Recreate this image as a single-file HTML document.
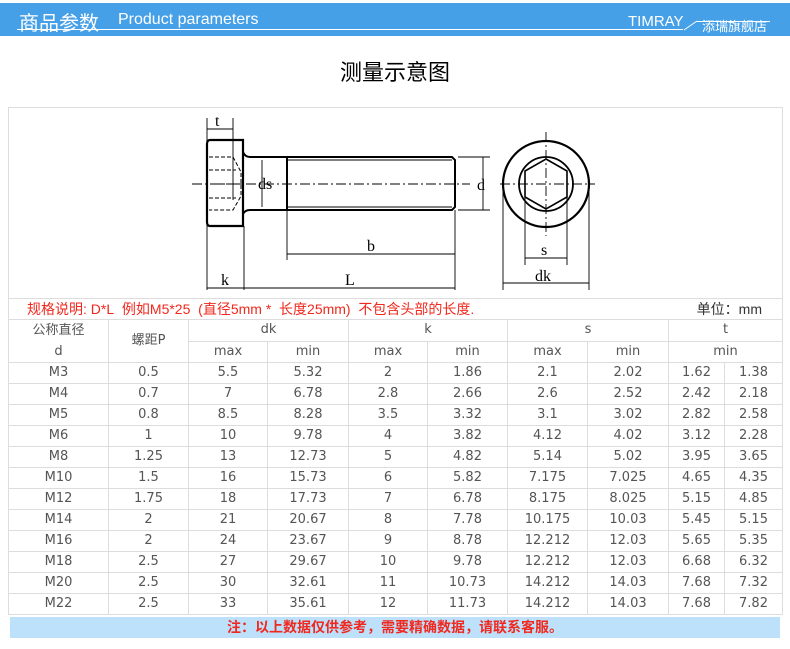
<!DOCTYPE html>
<html><head><meta charset="utf-8"><style>
*{margin:0;padding:0;box-sizing:border-box}
body{width:790px;height:649px;background:#fff;position:relative;font-family:"Liberation Sans","Noto Sans CJK SC",sans-serif;overflow:hidden}
.hdr{position:absolute;left:0;top:3px;width:790px;height:33px;background:#46a0e8;color:#fff}
.hdr .l1{position:absolute;left:19px;top:4px;font-size:20px}
.hdr .l2{position:absolute;left:118px;top:8px;font-size:16px}
.hdr .r1{position:absolute;left:628px;top:10px;font-size:15px}
.hdr .r2{position:absolute;left:702px;top:13px;font-size:13px}
.hdr .ul{position:absolute;left:17px;top:26px;width:666px;height:1px;background:#fff}
.hdr .ul2{position:absolute;left:697px;top:18px;width:73px;height:1px;background:#fff}
.title{position:absolute;left:0;width:790px;top:55px;text-align:center;font-size:22px;color:#000}
.box{position:absolute;left:8px;top:107px;width:775px;height:192px;border:1px solid #ddd;border-bottom:none}
table{position:absolute;left:8px;top:298px;border-collapse:collapse;table-layout:fixed;font-size:13px;color:#555;font-family:"DejaVu Sans","Noto Sans CJK SC",sans-serif}
td{border:1px solid #ddd;text-align:center;height:21px;padding:0;line-height:20px;white-space:nowrap}
.spec td{text-align:left;font-size:14px;font-family:"Liberation Sans","Noto Sans CJK SC",sans-serif}
.note{position:absolute;left:10px;top:617px;width:770px;height:21px;background:#bde0fb;color:#f0281e;text-align:center;font-size:14px;font-weight:bold;line-height:21px}
</style></head><body>
<div class="hdr"><span class="l1">商品参数</span><span class="l2">Product parameters</span><span class="r1">TIMRAY</span><span class="r2">添瑞旗舰店</span><div class="ul"></div><div class="ul2"></div>
<svg style="position:absolute;left:682px;top:16px" width="18" height="12"><line x1="2" y1="11" x2="15" y2="2" stroke="#fff" stroke-width="1"/></svg></div>
<div class="title">测量示意图</div>
<div class="box"></div>
<svg style="position:absolute;left:0;top:0" width="790" height="300" font-family="Liberation Serif,serif" font-size="16" fill="none" stroke="#000">
<path d="M210,140 H243 V226 H210 Q207,226 207,222 V144 Q207,140 210,140Z" stroke-width="2.2"/>
<path d="M243,152 Q245,157 250,157 H287 M243,214 Q245,210 250,210 H287" stroke-width="2"/>
<path d="M287,157 H452 L455,160 V207 L452,210 H287 Z M287,157 V210" stroke-width="2"/>
<path d="M287,160 H452 M287,207 H452" stroke-width="1"/>
<path d="M209,157 H233 L241,172 V196 L233,210 H209 M209,170 H236 M209,198 H236 M220,184 H241" stroke-width="1" stroke-dasharray="4,2"/>
<path d="M192,184 H470" stroke-width="0.9" stroke-dasharray="10,3,2,3"/>
<circle cx="546" cy="184" r="43" stroke-width="2.2"/>
<circle cx="546" cy="184" r="27" stroke-width="1.8"/>
<path d="M546,159 L567,171 V197 L546,209 L525,197 V171 Z" stroke-width="1.6"/>
<path d="M500,184 H595 M546,132 V236" stroke-width="0.9" stroke-dasharray="10,3,2,3"/>
<g stroke-width="0.9">
<path d="M207,118 V290 M233,118 V200 M244,226 V290 M455,210 V290 M287,210 V260 M458,157 H490 M458,210 H490 M503,184 V290 M589,184 V290 M525,197 V265 M567,197 V265"/>
<path d="M207,129 H233 M207,288 H244 M244,288 H455 M287,254 H455 M483,157 V210 M525,258 H567 M503,283 H589 M262,160 V207"/>
</g>
<g fill="#000" stroke="none">
<text x="215" y="126">t</text><text x="258" y="189">ds</text><text x="477" y="190">d</text><text x="367" y="251">b</text>
<text x="221" y="285">k</text><text x="345" y="285">L</text><text x="541" y="255">s</text><text x="535" y="281">dk</text></g>
</svg>
<table>
<colgroup><col style="width:100px"><col style="width:80px"><col style="width:79px"><col style="width:81px"><col style="width:79px"><col style="width:80px"><col style="width:80px"><col style="width:81px"><col style="width:56px"><col style="width:58px"></colgroup>
<tr class="spec"><td colspan="8" style="border-right:none;color:#f0281e;padding-left:18px">规格说明: D*L&nbsp; 例如M5*25&nbsp; (直径5mm *&nbsp; 长度25mm)&nbsp; 不包含头部的长度.</td><td colspan="2" style="border-left:none;text-align:right;padding-right:20px;color:#333">单位：mm</td></tr>
<tr><td rowspan="2" style="line-height:21px">公称直径<br>d</td><td rowspan="2">螺距P</td><td colspan="2">dk</td><td colspan="2">k</td><td colspan="2">s</td><td colspan="2">t</td></tr>
<tr><td>max</td><td>min</td><td>max</td><td>min</td><td>max</td><td>min</td><td colspan="2">min</td></tr>
<tr><td>M3</td><td>0.5</td><td>5.5</td><td>5.32</td><td>2</td><td>1.86</td><td>2.1</td><td>2.02</td><td>1.62</td><td>1.38</td></tr>
<tr><td>M4</td><td>0.7</td><td>7</td><td>6.78</td><td>2.8</td><td>2.66</td><td>2.6</td><td>2.52</td><td>2.42</td><td>2.18</td></tr>
<tr><td>M5</td><td>0.8</td><td>8.5</td><td>8.28</td><td>3.5</td><td>3.32</td><td>3.1</td><td>3.02</td><td>2.82</td><td>2.58</td></tr>
<tr><td>M6</td><td>1</td><td>10</td><td>9.78</td><td>4</td><td>3.82</td><td>4.12</td><td>4.02</td><td>3.12</td><td>2.28</td></tr>
<tr><td>M8</td><td>1.25</td><td>13</td><td>12.73</td><td>5</td><td>4.82</td><td>5.14</td><td>5.02</td><td>3.95</td><td>3.65</td></tr>
<tr><td>M10</td><td>1.5</td><td>16</td><td>15.73</td><td>6</td><td>5.82</td><td>7.175</td><td>7.025</td><td>4.65</td><td>4.35</td></tr>
<tr><td>M12</td><td>1.75</td><td>18</td><td>17.73</td><td>7</td><td>6.78</td><td>8.175</td><td>8.025</td><td>5.15</td><td>4.85</td></tr>
<tr><td>M14</td><td>2</td><td>21</td><td>20.67</td><td>8</td><td>7.78</td><td>10.175</td><td>10.03</td><td>5.45</td><td>5.15</td></tr>
<tr><td>M16</td><td>2</td><td>24</td><td>23.67</td><td>9</td><td>8.78</td><td>12.212</td><td>12.03</td><td>5.65</td><td>5.35</td></tr>
<tr><td>M18</td><td>2.5</td><td>27</td><td>29.67</td><td>10</td><td>9.78</td><td>12.212</td><td>12.03</td><td>6.68</td><td>6.32</td></tr>
<tr><td>M20</td><td>2.5</td><td>30</td><td>32.61</td><td>11</td><td>10.73</td><td>14.212</td><td>14.03</td><td>7.68</td><td>7.32</td></tr>
<tr><td>M22</td><td>2.5</td><td>33</td><td>35.61</td><td>12</td><td>11.73</td><td>14.212</td><td>14.03</td><td>7.68</td><td>7.82</td></tr>
</table>
<div class="note">注：以上数据仅供参考，需要精确数据，请联系客服。</div>
</body></html>
